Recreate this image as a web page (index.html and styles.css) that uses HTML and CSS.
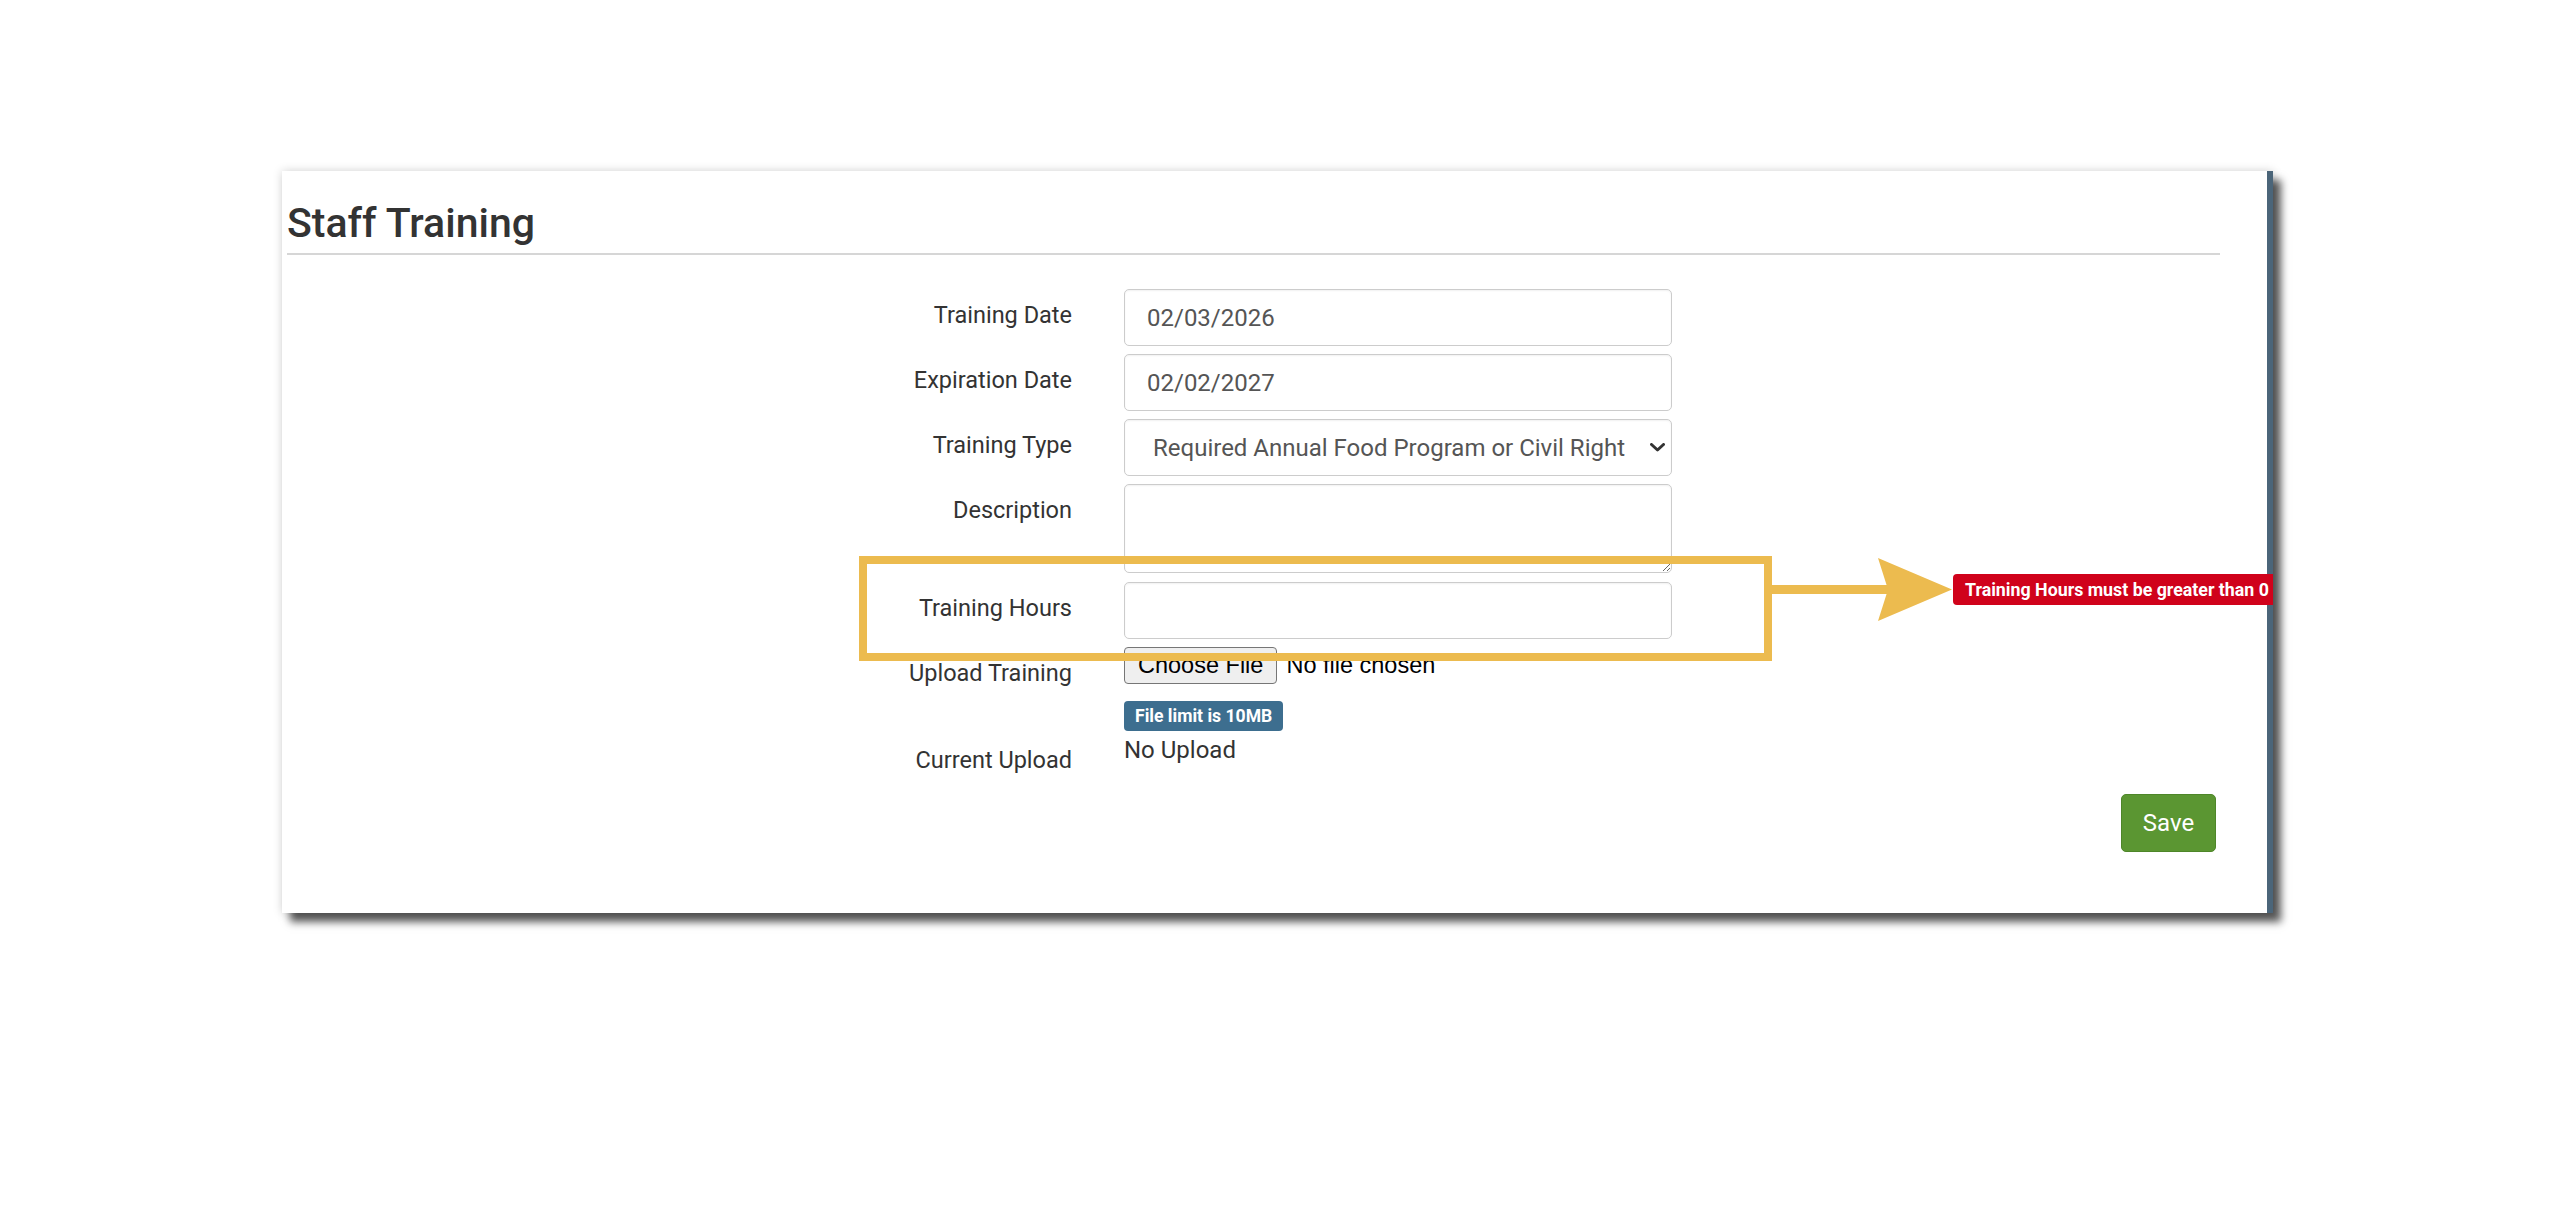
FILE: index.html
```html
<!DOCTYPE html>
<html lang="en">
<head>
    <meta charset="UTF-8">
    <meta name="viewport" content="width=device-width, initial-scale=1.0">
    <title>Staff Training</title>
    <link rel="stylesheet" href="styles.css">
</head>
<body>

    <div class="card">
        <h2 class="page-title">Staff Training</h2>

        <form class="form-horizontal">
            <div class="form-group">
                <label class="control-label">Training Date</label>
                <input class="form-control" type="text" value="02/03/2026">
            </div>

            <div class="form-group">
                <label class="control-label">Expiration Date</label>
                <input class="form-control" type="text" value="02/02/2027">
            </div>

            <div class="form-group">
                <label class="control-label">Training Type</label>
                <div class="select-wrap">
                    <select class="form-control">
                        <option>Required Annual Food Program or Civil Rights Training</option>
                    </select>
                    <svg class="select-arrow" viewBox="0 0 15 9" width="15" height="9">
                        <path d="M1.5 1.5 L7.5 7 L13.5 1.5" fill="none" stroke="#333" stroke-width="3" stroke-linecap="round" stroke-linejoin="round"/>
                    </svg>
                </div>
            </div>

            <div class="form-group group-description">
                <label class="control-label">Description</label>
                <textarea class="form-control"></textarea>
            </div>

            <div class="form-group">
                <label class="control-label">Training Hours</label>
                <input class="form-control" type="text" value="">
            </div>

            <!-- Upload -->
            <div class="form-group group-upload">
                <label class="control-label">Upload Training</label>
                <div class="file-field">
                    <div class="file-picker">
                        <button type="button" class="file-btn">Choose File</button>
                        <span class="file-name">No file chosen</span>
                    </div>
                    <span class="badge badge-info">File limit is 10MB</span>
                </div>
            </div>

            <div class="form-group">
                <label class="control-label label-static">Current Upload</label>
                <p class="form-static">No Upload</p>
            </div>

            <div class="form-actions">
                <button type="button" class="btn-save">Save</button>
            </div>
        </form>

        <!-- Annotation: highlight + arrow + validation message -->
        <div class="callout-box"></div>
        <svg class="callout-arrow" viewBox="0 0 180 66" width="180" height="66">
            <rect x="0" y="29" width="120" height="9" fill="#ecbb4f"/>
            <polygon points="106,2 180,33.5 106,65 116,33.5" fill="#ecbb4f"/>
        </svg>
        <span class="error-badge">Training Hours must be greater than 0</span>
    </div>

</body>
</html>
```

FILE: styles.css
```css
body {
    margin: 0;
    padding: 171px 0 0 282px;
    min-height: 1000px;
    background-color: #ffffff;
    font-family: Roboto, "Liberation Sans", Arial, sans-serif;
    color: #333333;
}

.card {
    position: relative;
    box-sizing: border-box;
    width: 1991px;
    height: 742px;
    padding: 30px 47px 0 5px;
    background-color: #ffffff;
    border-right: 6px solid #4b6579;
    box-shadow: 0 0 9px rgba(0, 0, 0, 0.18), 8px 9px 8px rgba(0, 0, 0, 0.65);
}

.page-title {
    margin: 0;
    padding-bottom: 8px;
    font-size: 41px;
    font-weight: 500;
    line-height: 44px;
    color: #333333;
    border-bottom: 2px solid #d6d6d6;
}

/* Form rows */
.form-horizontal {
    margin-top: 34px;
}

.form-group {
    display: grid;
    grid-template-columns: 785px 548px;
    column-gap: 52px;
    align-items: start;
    margin-bottom: 8px;
}

.group-description {
    margin-bottom: 9px;
}

.group-upload {
    margin-bottom: 7px;
}

.control-label {
    padding-top: 12px;
    font-size: 23.5px;
    line-height: 28px;
    text-align: right;
    color: #333333;
}

.label-static {
    padding-top: 8px;
}

.form-control {
    box-sizing: border-box;
    width: 548px;
    height: 57px;
    margin: 0;
    padding: 0 20px 0 22px;
    font-family: Roboto, sans-serif;
    font-size: 24px;
    color: #555555;
    background-color: #ffffff;
    border: 1px solid #cccccc;
    border-radius: 5px;
    box-shadow: inset 0 1px 2px rgba(0, 0, 0, 0.06);
    outline: none;
}

textarea.form-control {
    height: 89px;
    padding-top: 10px;
    resize: both;
}

.select-wrap {
    position: relative;
    width: 548px;
}

select.form-control {
    appearance: none;
    -webkit-appearance: none;
    padding: 0 46px 0 28px;
}

.select-arrow {
    position: absolute;
    left: 526px;
    top: 24px;
    pointer-events: none;
}

/* Upload */
.file-field {
    display: flex;
    flex-direction: column;
    align-items: flex-start;
}

.file-picker {
    display: flex;
    align-items: center;
    gap: 9px;
    font-family: "Liberation Sans", Arial, sans-serif;
    font-size: 23.5px;
    color: #000000;
}

.file-btn {
    box-sizing: border-box;
    height: 37px;
    padding: 0 13px;
    font-family: "Liberation Sans", Arial, sans-serif;
    font-size: 23.5px;
    line-height: 27px;
    color: #000000;
    background-color: #efefef;
    border: 1px solid #767676;
    border-radius: 4px;
}

.badge {
    display: inline-block;
    box-sizing: border-box;
    height: 30px;
    margin-top: 17px;
    padding: 0 11px;
    font-size: 17.6px;
    font-weight: 700;
    line-height: 30px;
    color: #ffffff;
    border-radius: 4px;
}

.badge-info {
    background-color: #3d6e8f;
}

.form-static {
    margin: 0;
    font-size: 24px;
    line-height: 24px;
    color: #333333;
}

.form-actions {
    display: flex;
    justify-content: flex-end;
    margin-top: 20px;
    padding-right: 4px;
}

.btn-save {
    box-sizing: border-box;
    width: 95px;
    height: 58px;
    font-family: Roboto, sans-serif;
    font-size: 24px;
    color: #ffffff;
    background-color: #5b9632;
    border: 1px solid #4e8629;
    border-radius: 5px;
    cursor: pointer;
}

/* Annotation overlay */
.callout-box {
    position: absolute;
    left: 577px;
    top: 385px;
    box-sizing: border-box;
    width: 913px;
    height: 105px;
    border: 8px solid #ecbb4f;
}

.callout-arrow {
    position: absolute;
    left: 1490px;
    top: 385px;
}

.error-badge {
    position: absolute;
    left: 1671px;
    right: -6px;
    top: 403px;
    height: 31px;
    padding-left: 12px;
    overflow: hidden;
    white-space: nowrap;
    font-size: 17.8px;
    font-weight: 700;
    line-height: 31px;
    color: #ffffff;
    background-color: #d0021b;
    border-radius: 4px 0 0 4px;
}
```
